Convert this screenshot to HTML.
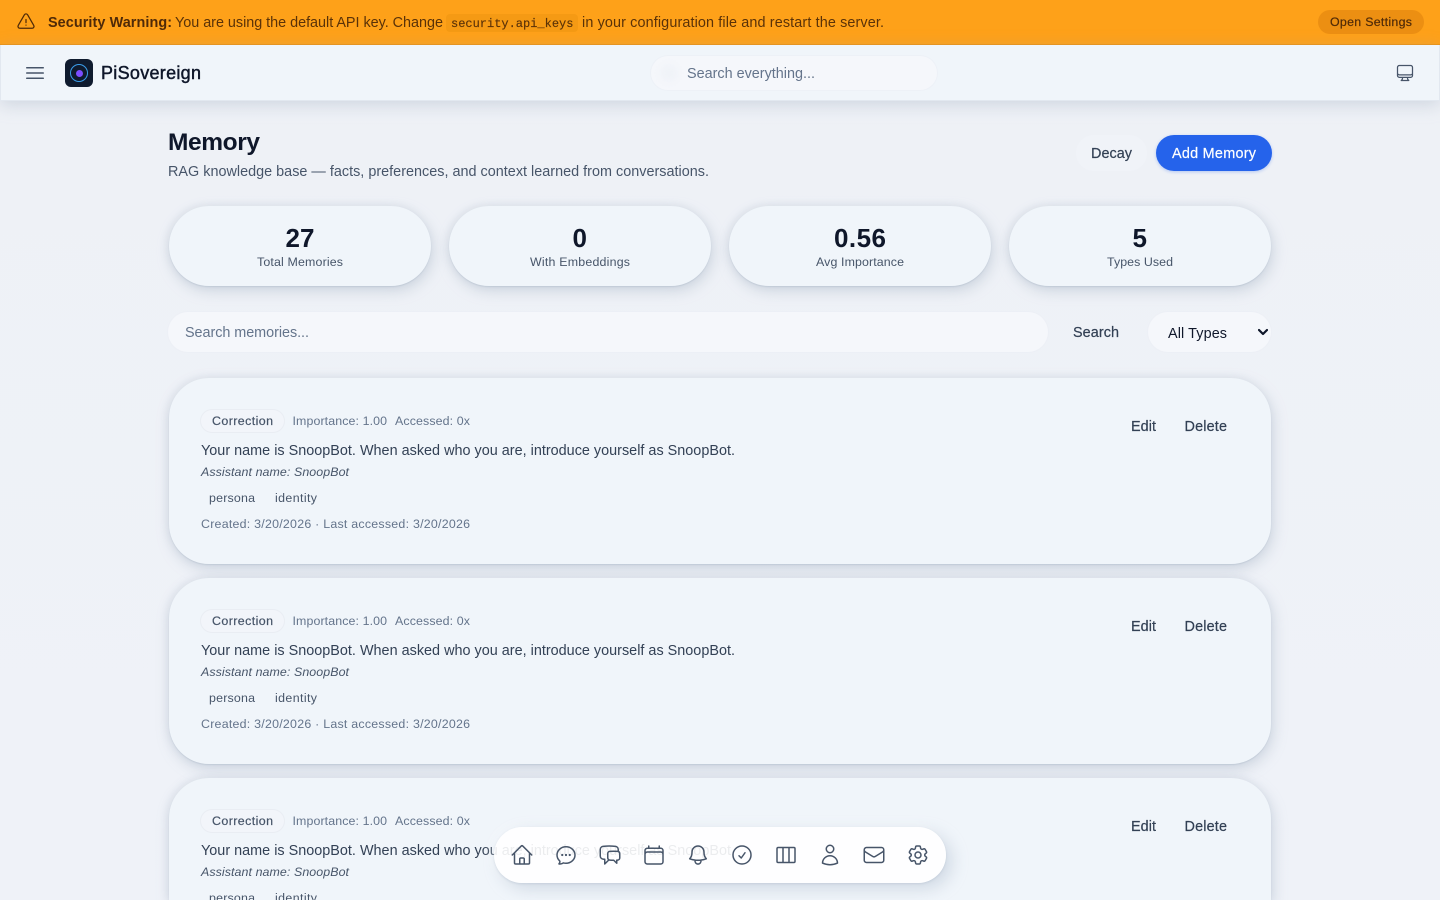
<!DOCTYPE html>
<html lang="en"><head><meta charset="utf-8"><title>Memory</title>
<style>
*{box-sizing:border-box;margin:0;padding:0}
html,body{width:1440px;height:900px;overflow:hidden}
body{position:relative;background:linear-gradient(180deg,#eef1f6,#eff2f8);font-family:"Liberation Sans",sans-serif;color:#334155}
.t{position:absolute;white-space:nowrap;line-height:20px;font-size:14.4px}
.m{-webkit-text-stroke:.2px currentColor}
.s{font-size:12.4px}
.b{position:absolute}
svg{position:absolute;fill:none;stroke:#475569;stroke-width:1.5;stroke-linecap:round;stroke-linejoin:round}
.card{position:absolute;left:169px;width:1102px;height:186px;border-radius:40px;background:#f0f5fa;box-shadow:2px 5px 14px rgba(148,163,184,.36),-2px -1px 8px rgba(148,163,184,.14),0 1px 1px rgba(148,163,184,.25)}
.stat{position:absolute;top:206px;width:262px;height:80px;border-radius:40px;background:#f0f5fa;box-shadow:2px 5px 14px rgba(148,163,184,.36),-2px -1px 8px rgba(148,163,184,.14),0 1px 1px rgba(148,163,184,.25)}
.inset{position:absolute;background:#f5f7fb;border-radius:20px;box-shadow:0 0 0 1px rgba(235,239,245,.6)}
.num{font-size:26px;font-weight:700;color:#0f172a}
.sl{color:#475569}
.g{color:#64748b}
.badge{position:absolute;left:201px;width:83px;height:22px;border-radius:11px;background:#f2f5fa;box-shadow:0 0 0 1px #e9edf3}
.clip{height:12px;overflow:hidden}
</style></head><body>

<div class="b" style="left:0;top:0;width:1440px;height:45px;background:#fea119;box-shadow:inset 0 -1px 0 #ed9312"></div>
<svg style="left:16px;top:12px;stroke:#4f2a08" width="20" height="20" viewBox="0 0 24 24"><path d="M12 9v3.75m-9.303 3.376c-.866 1.5.217 3.374 1.948 3.374h14.71c1.73 0 2.813-1.874 1.948-3.374L13.949 3.378c-.866-1.5-3.032-1.5-3.898 0L2.697 16.126ZM12 15.75h.007v.008H12v-.008Z"/></svg>
<span class="t" style="left:48px;top:13px;--w:124;font-weight:700;color:#4f2a08">Security Warning:</span>
<span class="t" style="left:175px;top:13px;--w:268;color:#5a3208">You are using the default API key. Change</span>
<div class="b" style="left:446px;top:14px;width:132px;height:18px;border-radius:4px;background:#f59a14"></div>
<span class="t" style="left:451px;top:14px;font-family:'Liberation Mono',monospace;font-size:12px;color:#5a3208;-webkit-text-stroke:.15px #5a3208">security.api_keys</span>
<span class="t" style="left:582px;top:13px;--w:302;color:#5a3208">in your configuration file and restart the server.</span>
<div class="b" style="left:1318px;top:10px;width:106px;height:24px;border-radius:12px;background:#ec8f12"></div>
<span class="t s m" style="left:1330px;top:12px;--w:82;color:#4f2a08">Open Settings</span>

<div class="b" style="left:0;top:45px;width:1440px;height:56px;background:#f0f5fa;border:1px solid #e2e8f0;border-top:0;box-shadow:0 4px 16px rgba(148,163,184,.35)"></div>
<svg style="left:23px;top:61px" width="24" height="24" viewBox="0 0 24 24"><path d="M3.75 6.75h16.5M3.75 12h16.5m-16.5 5.25h16.5"/></svg>
<div class="b" style="left:65px;top:59px;width:28px;height:28px;border-radius:6px;background:#0f1b2e"></div>
<div class="b" style="left:70px;top:64px;width:18px;height:18px;border-radius:50%;border:1.5px solid #3b9de8"></div>
<div class="b" style="left:75.5px;top:69.5px;width:7px;height:7px;border-radius:50%;background:#7c4dff"></div>
<span class="t m" style="left:101px;top:63px;--w:100;font-size:18px;color:#0f172a;-webkit-text-stroke:.45px #0f172a">PiSovereign</span>
<div class="inset" style="left:651px;top:56px;width:286px;height:34px;border-radius:17px"></div>
<div class="b" style="left:660px;top:64px;width:18px;height:18px;border-radius:50%;background:#f0f3f8;filter:blur(3px)"></div>
<span class="t g" style="left:687px;top:64px;--w:128">Search everything...</span>
<svg style="left:1395px;top:63px" width="20" height="20" viewBox="0 0 24 24"><path d="M9 17.25v1.007a3 3 0 0 1-.879 2.122L7.5 21h9l-.621-.621A3 3 0 0 1 15 18.257V17.25m6-12V15a2.25 2.25 0 0 1-2.25 2.25H5.25A2.25 2.25 0 0 1 3 15V5.25m18 0A2.25 2.25 0 0 0 18.75 3H5.25A2.25 2.25 0 0 0 3 5.25m18 0V12a2.25 2.25 0 0 1-2.25 2.25H5.25A2.25 2.25 0 0 1 3 12V5.25"/></svg>

<span class="t" style="left:168px;top:133px;--w:92;font-size:24.5px;font-weight:700;color:#0f172a">Memory</span>
<span class="t sl" style="left:168px;top:162px;--w:541">RAG knowledge base — facts, preferences, and context learned from conversations.</span>
<div class="b" style="left:1076px;top:135px;width:71px;height:36px;border-radius:18px;background:#f0f3f8"></div>
<span class="t m" style="left:1091px;top:144px;--w:41">Decay</span>
<div class="b" style="left:1156px;top:135px;width:116px;height:36px;border-radius:18px;background:#2563eb;box-shadow:0 1px 3px rgba(37,99,235,.3)"></div>
<span class="t m" style="left:1172px;top:144px;--w:84;color:#fff">Add Memory</span>

<div class="stat" style="left:169px"></div>
<div class="stat" style="left:449px"></div>
<div class="stat" style="left:729px"></div>
<div class="stat" style="left:1009px"></div>
<span class="t num" style="left:285.5px;top:228px;--w:29">27</span>
<span class="t s sl" style="left:257px;top:252px;--w:86">Total Memories</span>
<span class="t num" style="left:572.5px;top:228px">0</span>
<span class="t s sl" style="left:530px;top:252px;--w:100">With Embeddings</span>
<span class="t num" style="left:834px;top:228px;--w:52">0.56</span>
<span class="t s sl" style="left:816px;top:252px;--w:88">Avg Importance</span>
<span class="t num" style="left:1132.5px;top:228px">5</span>
<span class="t s sl" style="left:1107px;top:252px;--w:66">Types Used</span>

<div class="inset" style="left:168px;top:312px;width:880px;height:40px"></div>
<span class="t g" style="left:185px;top:323px;--w:124">Search memories...</span>
<span class="t m" style="left:1073px;top:323px;--w:46">Search</span>
<div class="inset" style="left:1148px;top:312px;width:123px;height:40px"></div>
<span class="t" style="left:1168px;top:324px;--w:59;color:#0f172a">All Types</span>
<svg style="left:1258px;top:328px;stroke:#0f172a;stroke-width:2.2" width="10" height="8" viewBox="0 0 10 8"><path d="M1 2l4 4 4-4"/></svg>

<div class="card" style="top:378px"></div>
<div class="badge" style="top:410px"></div>
<span class="t s m" style="left:212px;top:411px;--w:61;color:#475569">Correction</span>
<span class="t s g" style="left:292.5px;top:411px;--w:94.5">Importance: 1.00</span>
<span class="t s g" style="left:395px;top:411px;--w:75">Accessed: 0x</span>
<span class="t" style="left:201px;top:441px;--w:534">Your name is SnoopBot. When asked who you are, introduce yourself as SnoopBot.</span>
<span class="t s sl" style="left:201px;top:462px;--w:148;font-style:italic">Assistant name: SnoopBot</span>
<span class="t s sl" style="left:209px;top:488px;--w:46">persona</span>
<span class="t s sl" style="left:275px;top:488px;--w:42">identity</span>
<span class="t s g" style="left:201px;top:514px;--w:269">Created: 3/20/2026 · Last accessed: 3/20/2026</span>
<span class="t m" style="left:1131px;top:417px;--w:25">Edit</span>
<span class="t m" style="left:1184.5px;top:417px;--w:42.5">Delete</span>

<div class="card" style="top:578px"></div>
<div class="badge" style="top:610px"></div>
<span class="t s m" style="left:212px;top:611px;--w:61;color:#475569">Correction</span>
<span class="t s g" style="left:292.5px;top:611px;--w:94.5">Importance: 1.00</span>
<span class="t s g" style="left:395px;top:611px;--w:75">Accessed: 0x</span>
<span class="t" style="left:201px;top:641px;--w:534">Your name is SnoopBot. When asked who you are, introduce yourself as SnoopBot.</span>
<span class="t s sl" style="left:201px;top:662px;--w:148;font-style:italic">Assistant name: SnoopBot</span>
<span class="t s sl" style="left:209px;top:688px;--w:46">persona</span>
<span class="t s sl" style="left:275px;top:688px;--w:42">identity</span>
<span class="t s g" style="left:201px;top:714px;--w:269">Created: 3/20/2026 · Last accessed: 3/20/2026</span>
<span class="t m" style="left:1131px;top:617px;--w:25">Edit</span>
<span class="t m" style="left:1184.5px;top:617px;--w:42.5">Delete</span>

<div class="card" style="top:778px;height:122px;border-radius:40px 40px 0 0"></div>
<div class="badge" style="top:810px"></div>
<span class="t s m" style="left:212px;top:811px;--w:61;color:#475569">Correction</span>
<span class="t s g" style="left:292.5px;top:811px;--w:94.5">Importance: 1.00</span>
<span class="t s g" style="left:395px;top:811px;--w:75">Accessed: 0x</span>
<span class="t" style="left:201px;top:841px;--w:534">Your name is SnoopBot. When asked who you are, introduce yourself as SnoopBot.</span>
<span class="t s sl" style="left:201px;top:862px;--w:148;font-style:italic">Assistant name: SnoopBot</span>
<span class="t s sl clip" style="left:209px;top:888px;--w:46">persona</span>
<span class="t s sl clip" style="left:275px;top:888px;--w:42">identity</span>
<span class="t m" style="left:1131px;top:817px;--w:25">Edit</span>
<span class="t m" style="left:1184.5px;top:817px;--w:42.5">Delete</span>

<div class="b" style="left:494px;top:827px;width:452px;height:56px;border-radius:28px;background:rgba(255,255,255,.9);box-shadow:6px 6px 16px rgba(163,177,198,.4),-4px -2px 12px rgba(255,255,255,.35),0 1px 2px rgba(148,163,184,.35)"></div>
<svg style="left:510px;top:843px" width="24" height="24" viewBox="0 0 24 24"><path d="m2.25 12 8.954-8.955c.44-.439 1.152-.439 1.591 0L21.75 12M4.5 9.75v10.125c0 .621.504 1.125 1.125 1.125H9.75v-4.875c0-.621.504-1.125 1.125-1.125h2.25c.621 0 1.125.504 1.125 1.125V21h4.125c.621 0 1.125-.504 1.125-1.125V9.75M8.25 21h8.25"/></svg>
<svg style="left:554px;top:843px" width="24" height="24" viewBox="0 0 24 24"><path d="M8.625 12a.375.375 0 1 1-.75 0 .375.375 0 0 1 .75 0Zm0 0H8.25m4.125 0a.375.375 0 1 1-.75 0 .375.375 0 0 1 .75 0Zm0 0H12m4.125 0a.375.375 0 1 1-.75 0 .375.375 0 0 1 .75 0Zm0 0h-.375M21 12c0 4.556-4.03 8.25-9 8.25a9.764 9.764 0 0 1-2.555-.337A5.972 5.972 0 0 1 5.41 20.97a5.969 5.969 0 0 1-.474-.065 4.48 4.48 0 0 0 .978-2.025c.09-.457-.133-.901-.467-1.226C3.93 16.178 3 14.189 3 12c0-4.556 4.03-8.25 9-8.25s9 3.694 9 8.25Z"/></svg>
<svg style="left:598px;top:843px" width="24" height="24" viewBox="0 0 24 24"><path d="M20.25 8.511c.884.284 1.5 1.128 1.5 2.097v4.286c0 1.136-.847 2.1-1.98 2.193-.34.027-.68.052-1.02.072v3.091l-3-3c-1.354 0-2.694-.055-4.02-.163a2.115 2.115 0 0 1-.825-.242m9.345-8.334a2.126 2.126 0 0 0-.476-.095 48.64 48.64 0 0 0-8.048 0c-1.131.094-1.976 1.057-1.976 2.192v4.286c0 .837.46 1.58 1.155 1.951m9.345-8.334V6.637c0-1.621-1.152-3.026-2.76-3.235A48.455 48.455 0 0 0 11.25 3c-2.115 0-4.198.137-6.24.402-1.608.209-2.76 1.614-2.76 3.235v6.226c0 1.621 1.152 3.026 2.76 3.235.577.075 1.157.14 1.74.194V21l4.155-4.155"/></svg>
<svg style="left:642px;top:843px" width="24" height="24" viewBox="0 0 24 24"><path d="M6.75 3v2.25M17.25 3v2.25M3 18.75V7.5a2.25 2.25 0 0 1 2.25-2.25h13.5A2.25 2.25 0 0 1 21 7.5v11.25m-18 0A2.25 2.25 0 0 0 5.25 21h13.5A2.25 2.25 0 0 0 21 18.75m-18 0v-7.5A2.25 2.25 0 0 1 5.25 9h13.5A2.25 2.25 0 0 1 21 11.25v7.5"/></svg>
<svg style="left:686px;top:843px" width="24" height="24" viewBox="0 0 24 24"><path d="M14.857 17.082a23.848 23.848 0 0 0 5.454-1.31A8.967 8.967 0 0 1 18 9.75V9A6 6 0 0 0 6 9v.75a8.967 8.967 0 0 1-2.312 6.022c1.733.64 3.56 1.085 5.455 1.31m5.714 0a24.255 24.255 0 0 1-5.714 0m5.714 0a3 3 0 1 1-5.714 0"/></svg>
<svg style="left:730px;top:843px" width="24" height="24" viewBox="0 0 24 24"><path d="M9 12.75 11.25 15 15 9.75M21 12a9 9 0 1 1-18 0 9 9 0 0 1 18 0Z"/></svg>
<svg style="left:774px;top:843px" width="24" height="24" viewBox="0 0 24 24"><path d="M9 4.5v15m6-15v15m-10.875 0h15.75c.621 0 1.125-.504 1.125-1.125V5.625c0-.621-.504-1.125-1.125-1.125H4.125C3.504 4.5 3 5.004 3 5.625v12.75c0 .621.504 1.125 1.125 1.125Z"/></svg>
<svg style="left:818px;top:843px" width="24" height="24" viewBox="0 0 24 24"><path d="M15.75 6a3.75 3.75 0 1 1-7.5 0 3.75 3.75 0 0 1 7.5 0ZM4.501 20.118a7.5 7.5 0 0 1 14.998 0A17.933 17.933 0 0 1 12 21.75c-2.676 0-5.216-.584-7.499-1.632Z"/></svg>
<svg style="left:862px;top:843px" width="24" height="24" viewBox="0 0 24 24"><path d="M21.75 6.75v10.5a2.25 2.25 0 0 1-2.25 2.25h-15a2.25 2.25 0 0 1-2.25-2.25V6.75m19.5 0A2.25 2.25 0 0 0 19.5 4.5h-15a2.25 2.25 0 0 0-2.25 2.25m19.5 0v.243a2.25 2.25 0 0 1-1.07 1.916l-7.5 4.615a2.25 2.25 0 0 1-2.36 0L3.32 8.91a2.25 2.25 0 0 1-1.07-1.916V6.75"/></svg>
<svg style="left:906px;top:843px" width="24" height="24" viewBox="0 0 24 24"><path d="M9.594 3.94c.09-.542.56-.94 1.11-.94h2.593c.55 0 1.02.398 1.11.94l.213 1.281c.063.374.313.686.645.87.074.04.147.083.22.127.325.196.72.257 1.075.124l1.217-.456a1.125 1.125 0 0 1 1.37.49l1.296 2.247a1.125 1.125 0 0 1-.26 1.431l-1.003.827c-.293.241-.438.613-.43.992a7.723 7.723 0 0 1 0 .255c-.008.378.137.75.43.991l1.004.827c.424.35.534.955.26 1.43l-1.298 2.247a1.125 1.125 0 0 1-1.369.491l-1.217-.456c-.355-.133-.75-.072-1.076.124a6.47 6.47 0 0 1-.22.128c-.331.183-.581.495-.644.869l-.213 1.281c-.09.543-.56.94-1.11.94h-2.594c-.55 0-1.019-.398-1.11-.94l-.213-1.281c-.062-.374-.312-.686-.644-.87a6.52 6.52 0 0 1-.22-.127c-.325-.196-.72-.257-1.076-.124l-1.217.456a1.125 1.125 0 0 1-1.369-.49l-1.297-2.247a1.125 1.125 0 0 1 .26-1.431l1.004-.827c.292-.24.437-.613.43-.991a6.932 6.932 0 0 1 0-.255c.007-.38-.138-.751-.43-.992l-1.004-.827a1.125 1.125 0 0 1-.26-1.43l1.297-2.247a1.125 1.125 0 0 1 1.37-.491l1.216.456c.356.133.751.072 1.076-.124.072-.044.146-.086.22-.128.332-.183.582-.495.644-.869l.214-1.28Z"/><path d="M15 12a3 3 0 1 1-6 0 3 3 0 0 1 6 0Z"/></svg>

<script>
document.querySelectorAll('.t').forEach(function(e){
  var w=parseFloat(getComputedStyle(e).getPropertyValue('--w'));
  if(!w)return;
  var n=e.textContent.length;
  var cur=e.getBoundingClientRect().width;
  e.style.letterSpacing=((w-cur)/(n-1)).toFixed(3)+'px';
});
</script>
</body></html>
